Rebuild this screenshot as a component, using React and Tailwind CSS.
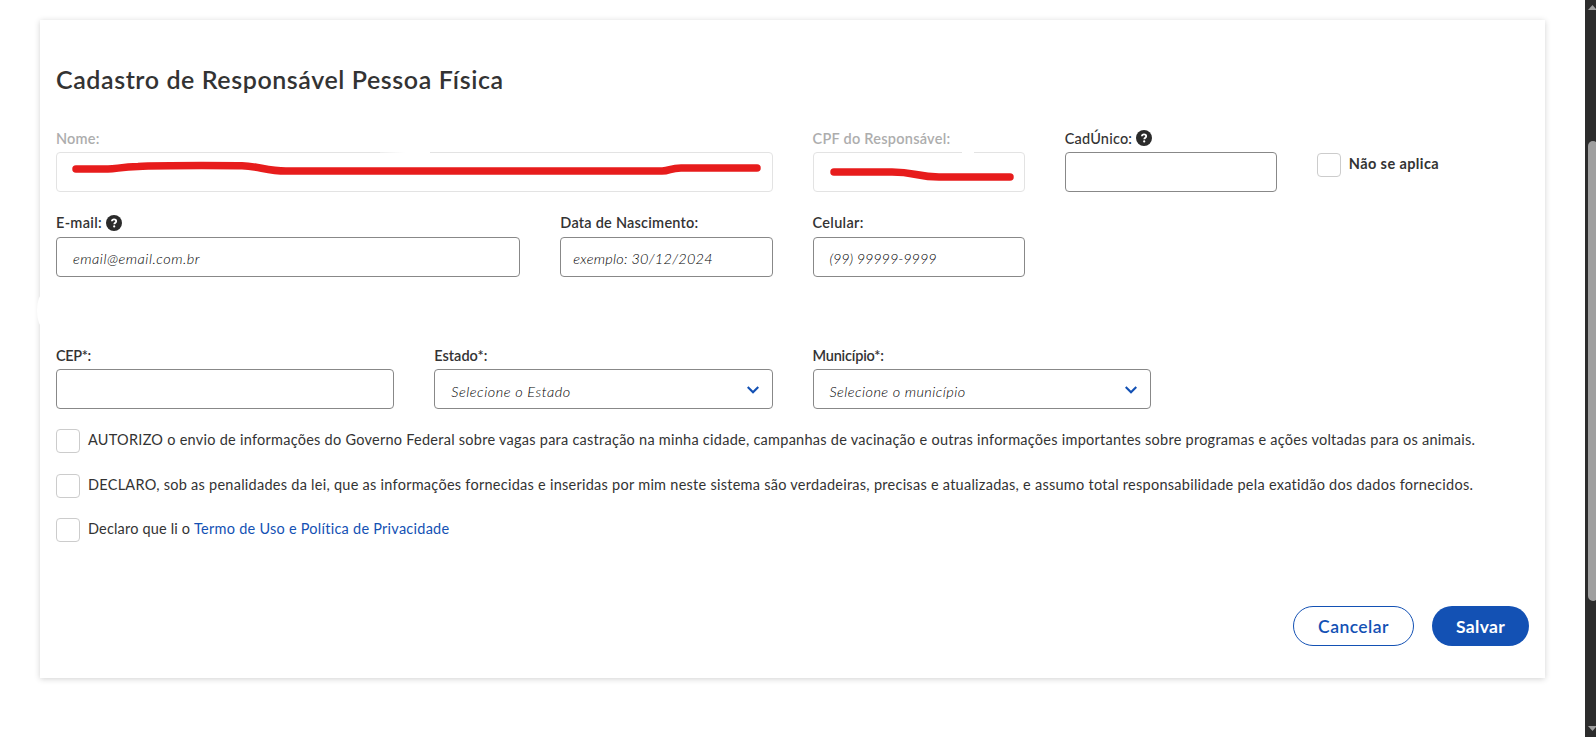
import React from "react";

function HelpIcon() {
  return (
    <svg viewBox="0 0 16 16" className="mb-px size-4 shrink-0" aria-hidden="true">
      <circle cx="8" cy="8" r="8" fill="#2b2b2b" />
      <path
        d="M5.9 6.3C6 5 6.9 4.4 8 4.4c1.2 0 2.2.7 2.2 1.8 0 1.5-1.9 1.5-1.9 3"
        fill="none"
        stroke="#fff"
        strokeWidth="1.8"
      />
      <circle cx="8.2" cy="11.4" r="1.1" fill="#fff" />
    </svg>
  );
}

function Chevron() {
  return (
    <svg viewBox="0 0 12 8" className="mt-px h-2 w-3 shrink-0" aria-hidden="true">
      <path d="M0.7 1 6 6.3 11.3 1" fill="none" stroke="#1351b4" strokeWidth="2.2" />
    </svg>
  );
}

function Field({ label, tracking = "tracking-[0.2px]", weight = "font-semibold", shift = "pt-0.5", help, disabled, className, children }) {
  return (
    <div className={`flex flex-col ${className}`}>
      <div className={`flex h-5 items-center gap-1 whitespace-nowrap text-[14.5px] leading-5 ${disabled ? "text-[#adadad]" : "text-[#333]"}`}>
        <span className={`${tracking} ${weight} ${shift}`}>{label}</span>
        {help && <HelpIcon />}
      </div>
      {children}
    </div>
  );
}

function Box({ text, tracking = "", pad = "px-4", stroke, chevron }) {
  return (
    <div className={`relative mt-1 flex h-10 items-center justify-between rounded border ${pad} ${stroke ? "border-[#e3e3e3]" : "border-[#888]"}`}>
      <span className={`whitespace-nowrap text-[14.5px] font-light italic text-black ${chevron ? "mt-1.5" : "mt-1"} ${tracking}`}>{text}</span>
      {chevron && <Chevron />}
      {stroke}
    </div>
  );
}

function Check({ children, className = "" }) {
  return (
    <div className={`flex h-6 gap-2 ${className}`}>
      <span className="size-6 shrink-0 rounded border border-[#ccc] bg-white" />
      <span className="whitespace-nowrap text-[14.5px] leading-[22px] text-[#333]">{children}</span>
    </div>
  );
}

function NameStroke() {
  return (
    <>
      <span className="absolute -top-px left-[323px] h-px w-[50px] bg-linear-to-r from-white/30 via-white to-white" />
      <svg viewBox="0 0 716 40" className="absolute -top-px -left-px h-10 w-[716px]" aria-hidden="true">
        <path
          d="M20 17H52C60 17 65 15 82 14.5C105 13.2 150 13.5 186 13.7C202 14 211 19 230 19H606C614 19 614 16 625 16H701"
          fill="none"
          stroke="#e71c1c"
          strokeWidth="7.5"
          strokeLinecap="round"
        />
      </svg>
    </>
  );
}

function CpfStroke() {
  return (
    <>
      <span className="absolute -top-px left-[148px] h-px w-3 bg-white" />
      <svg viewBox="0 0 212 40" className="absolute -top-px -left-px h-10 w-[212px]" aria-hidden="true">
        <path
          d="M21 20H79C102 20 104 25 126 25H197"
          fill="none"
          stroke="#e71c1c"
          strokeWidth="7.5"
          strokeLinecap="round"
        />
      </svg>
    </>
  );
}

export default function App() {
  return (
    <div className="flex h-[737px] w-[1596px] overflow-hidden bg-white font-['Lato',sans-serif] text-[#333]">
      <main className="flex-1 pt-5 pl-10">
        <section className="relative flex h-[658px] w-[1505px] flex-col bg-white px-4 pt-[43px] shadow-[0_1px_6px_rgba(0,0,0,0.18)]">
          <span className="absolute top-[274px] -left-[3px] h-[33px] w-3 rounded-[50%] bg-white" />
          <h1 className="h-8 whitespace-nowrap text-[25px] leading-8 font-semibold tracking-[0.58px]">
            Cadastro de Responsável Pessoa Física
          </h1>

          <div className="mt-[33px] grid w-[1473px] grid-cols-12 gap-x-10">
            <Field className="col-span-6" label="Nome:" disabled>
              <Box stroke={<NameStroke />} />
            </Field>
            <Field className="col-span-2" label="CPF do Responsável:" tracking="tracking-[0.25px]" disabled>
              <Box stroke={<CpfStroke />} />
            </Field>
            <Field className="col-span-2" label="CadÚnico:" weight="font-medium" help>
              <Box />
            </Field>
            <Check className="col-span-2 mt-[25px]">
              <span className="font-bold tracking-[0.4px]">Não se aplica</span>
            </Check>
          </div>

          <div className="mt-[21px] grid w-[1473px] grid-cols-12 gap-x-10">
            <Field className="col-span-4" label="E-mail:" tracking="tracking-[0.3px]" shift="" help>
              <Box text="email@email.com.br" tracking="tracking-[0.5px]" />
            </Field>
            <Field className="col-span-2" label="Data de Nascimento:" tracking="tracking-[0.23px]" shift="">
              <Box text="exemplo: 30/12/2024" tracking="tracking-[0.24px]" pad="px-3" />
            </Field>
            <Field className="col-span-2" label="Celular:" tracking="tracking-[0.32px]" shift="">
              <Box text="(99) 99999-9999" tracking="tracking-[-0.1px]" />
            </Field>
          </div>

          <div className="mt-[68px] grid w-[1473px] grid-cols-12 gap-x-10">
            <Field className="col-span-3" label="CEP*:" tracking="tracking-[-0.4px]">
              <Box />
            </Field>
            <Field className="col-span-3" label="Estado*:" tracking="tracking-[0px]">
              <Box text="Selecione o Estado" tracking="tracking-[0.52px]" pad="pl-4 pr-[13px]" chevron />
            </Field>
            <Field className="col-span-3" label="Município*:" tracking="tracking-[-0.2px]">
              <Box text="Selecione o município" tracking="tracking-[0.44px]" pad="pl-4 pr-[13px]" chevron />
            </Field>
          </div>

          <div className="mt-5 flex flex-col">
            <Check>
              <span className="tracking-[0.256px]">
                AUTORIZO o envio de informações do Governo Federal sobre vagas para castração na minha cidade, campanhas de vacinação e outras informações importantes sobre programas e ações voltadas para os animais.
              </span>
            </Check>
            <Check className="mt-[21px]">
              <span className="tracking-[0.262px]">
                DECLARO, sob as penalidades da lei, que as informações fornecidas e inseridas por mim neste sistema são verdadeiras, precisas e atualizadas, e assumo total responsabilidade pela exatidão dos dados fornecidos.
              </span>
            </Check>
            <Check className="mt-5">
              <span className="tracking-[0.17px]">
                Declaro que li o{" "}
                <a className="tracking-[0.25px] text-[#1351b4]">Termo de Uso e Política de Privacidade</a>
              </span>
            </Check>
          </div>

          <div className="mt-16 flex justify-end gap-[18px]">
            <button className="h-10 w-[121px] rounded-full border border-[#1351b4] pt-0.5 text-[17.5px] font-semibold tracking-[0.45px] text-[#1351b4]">
              Cancelar
            </button>
            <button className="h-10 w-[97px] rounded-full bg-[#1351b4] pt-0.5 text-[17.5px] font-bold tracking-[0.35px] text-white">
              Salvar
            </button>
          </div>
        </section>
      </main>

      <div className="flex w-[11px] shrink-0 flex-col overflow-hidden bg-[#2c2c2c] pl-[3px]">
        <svg viewBox="0 0 8 5" className="mt-[5px] h-[5px] w-2 shrink-0" aria-hidden="true">
          <path d="M0 5 4.5 0 9 5z" fill="#9f9f9f" />
        </svg>
        <div className="mt-[131px] h-[460px] w-[10px] shrink-0 rounded-full bg-[#9f9f9f]" />
        <svg viewBox="0 0 8 5" className="mt-auto mb-[6px] h-[5px] w-2 shrink-0" aria-hidden="true">
          <path d="M0 0 4.5 5 9 0z" fill="#9f9f9f" />
        </svg>
      </div>
    </div>
  );
}
